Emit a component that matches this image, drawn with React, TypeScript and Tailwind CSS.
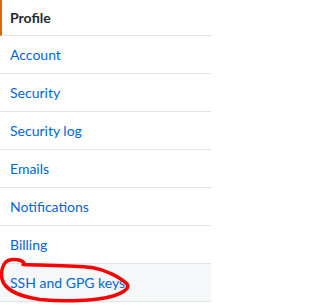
const items = [
  { label: "Account" },
  { label: "Security" },
  { label: "Security log" },
  { label: "Emails" },
  { label: "Notifications" },
  { label: "Billing" },
  { label: "SSH and GPG keys", hover: true },
];

export default function App() {
  return (
    <div className="relative w-[211px] h-[305px] bg-white overflow-hidden font-['Lato','Noto_Sans',sans-serif] text-[14px]">
      <nav className="flex flex-col">
        {/* Selected item */}
        <div className="flex items-center h-[36px] border-b border-[#e1e4e8] border-l-2 border-l-[#e36209] pl-[8px] font-bold text-[#24292e]">
          Profile
        </div>
        {items.map((item) => (
          <a
            key={item.label}
            className={`flex items-center h-[38px] border-b border-[#e1e4e8] pl-[10px] text-[#0366d6] ${
              item.hover ? "bg-[#f6f8fa]" : "bg-white"
            }`}
          >
            {item.label}
          </a>
        ))}
      </nav>

      {/* Hand-drawn red mark */}
      <svg
        className="absolute left-0 top-0 pointer-events-none"
        width="211"
        height="305"
        viewBox="0 0 211 305"
        fill="none"
      >
        <path
          d="M24 263 C22 259.5, 14 258.5, 8 260.5 C3 263, 0.5 271, 2 279 C4 288, 16 296, 40 299.5 C65 302, 95 301, 113 296 C124 292.5, 130 288, 127 284 C120 277, 106 270, 92 267.5 C72 265, 45 265.5, 23 264.5"
          stroke="#ff0000"
          strokeWidth="3.5"
          strokeLinecap="round"
          strokeLinejoin="round"
        />
      </svg>
    </div>
  );
}
